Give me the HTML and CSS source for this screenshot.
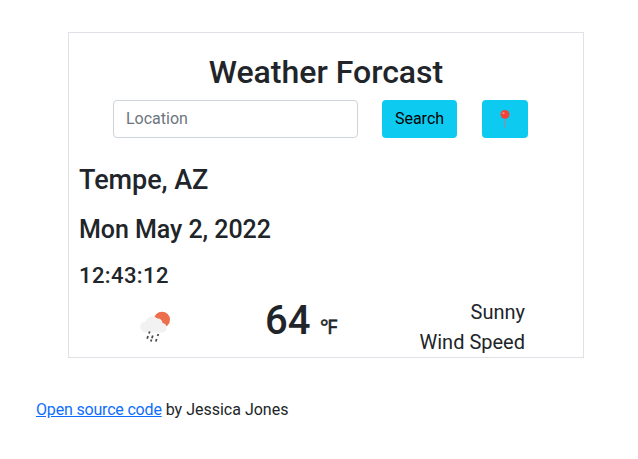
FILE: index.html
```html
<!DOCTYPE html>
<html lang="en">
<head>
<meta charset="utf-8">
<title>Weather Forecast</title>
<link rel="stylesheet" href="styles.css">
</head>
<body>
<main class="card">
  <h1 class="title">Weather Forcast</h1>
  <form class="search">
    <input class="field" type="text" placeholder="Location">
    <button class="btn" type="button">Search</button>
    <button class="btn locate" type="button" aria-label="Use my location">
      <svg width="12" height="18" viewBox="0 0 12 18"><path d="M5 8h2v8.500l-1 1.400-1-1.400z" fill="#62a4bb"/><circle cx="6" cy="4.400" r="4.400" fill="#f44336"/><circle cx="4.500" cy="3.200" r="1.100" fill="#ff8a75"/></svg>
    </button>
  </form>
  <h2 class="city">Tempe, AZ</h2>
  <h3 class="date">Mon May 2, 2022</h3>
  <h4 class="time">12:43:12</h4>
  <section class="now">
    <div class="icon">
      <svg width="34" height="34" viewBox="0 0 34 34"><circle cx="23" cy="8.700" r="8" fill="#ec6e4c"/><path d="M7 21.500a5.500 5.500 0 0 1-.5-11A7.200 7.200 0 0 1 18.500 7.500a4.500 4.500 0 0 1 5 4.500 4.800 4.800 0 0 1 0 9.500z" fill="#f2f2f2"/><path d="M10.700 20.500l-.7 2M9 25l-.8 2.700M13.800 24.500l-.9 2.700M19.400 23l-.8 2M12.500 28.500l-.6 2M17.700 28l-.9 2.500" fill="none" stroke="#4c4c4c" stroke-width="1.800"/></svg>
    </div>
    <div class="temp">64 <span class="unit">℉</span></div>
    <div class="info"><div>Sunny</div><div>Wind Speed</div></div>
  </section>
</main>
<footer class="foot"><a href="#">Open source code</a> by Jessica Jones</footer>
</body>
</html>
```
FILE: styles.css
```css
* { box-sizing: border-box; }
body { margin: 0; padding: 32px 54px 0 36px; background: #fff; color: #212529; font: 16px/24px Roboto, sans-serif; }
h1, h2, h3, h4 { margin: 0; font-weight: 500; }
.card { width: 516px; height: 326px; margin-left: 32px; border: 1px solid #dee2e6; padding: 20px 10px 0; }
.title { font-size: 32px; line-height: 38px; text-align: center; margin-bottom: 9px; }
.search { display: flex; padding-left: 34px; }
.field { width: 245px; height: 38px; padding: 5px 12px 7px; border: 1px solid #ced4da; border-radius: 4px; font: inherit; margin-right: 24px; }
.field::placeholder { color: #6c757d; opacity: 1; }
.btn { width: 75px; height: 38px; padding: 0; border: 0; border-radius: 4px; background: #0dcaf0; color: #000; font: inherit; }
.locate { width: 46px; margin-left: 25px; display: flex; align-items: center; justify-content: center; }
.city { font-size: 27px; line-height: 32px; margin-top: 26px; letter-spacing: -.05px; }
.date { font-size: 25px; line-height: 30px; margin-top: 19px; letter-spacing: -.05px; }
.time { font-size: 22px; line-height: 26px; margin-top: 18px; letter-spacing: .4px; }
.now { display: flex; margin-top: 8px; }
.icon { width: 186px; padding: 14px 0 0 60px; }
.temp { width: 110px; font-size: 40px; line-height: 48px; font-weight: 500; white-space: nowrap; }
.unit { font-size: 20px; -webkit-text-stroke: .5px #212529; }
.info { width: 150px; font-size: 20px; line-height: 30px; text-align: right; }
.foot { margin-top: 40px; }
.foot a { color: #0d6efd; text-decoration: underline; letter-spacing: -.18px; }
```
